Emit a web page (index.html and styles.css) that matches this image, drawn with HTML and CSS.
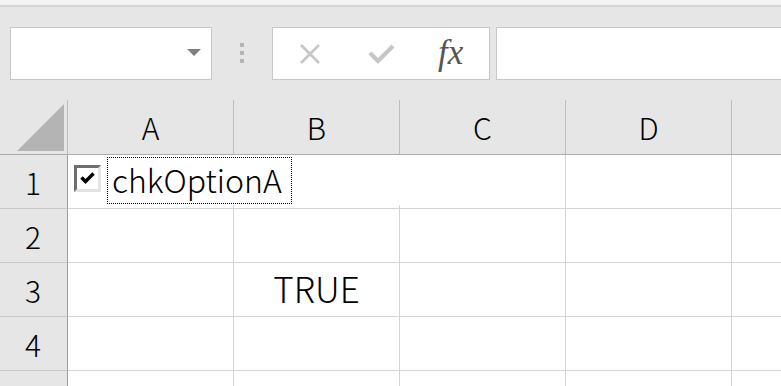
FILE: index.html
```html
<!DOCTYPE html>
<html lang="ja">
<head>
    <meta charset="UTF-8">
    <title>Sheet1</title>
    <link rel="stylesheet" href="styles.css">
</head>
<body>
    <div class="topstrip"></div>

    <div class="toolbar">
        <div class="namebox">
            <span class="drop"></span>
        </div>
        <div class="grip">
            <span></span><span></span><span></span>
        </div>
        <div class="fbuttons">
            <svg class="ico" width="24" height="24" viewBox="0 0 24 24">
                <path d="M3 3 L21 21 M21 3 L3 21" stroke="#c6c6c6" stroke-width="2.6" fill="none"/>
            </svg>
            <svg class="ico" width="28" height="24" viewBox="0 0 28 24">
                <path d="M2 11 L10 19 L25 4" stroke="#c6c6c6" stroke-width="4.2" fill="none"/>
            </svg>
            <span class="fx">fx</span>
        </div>
        <div class="formula"></div>
    </div>

    <div class="sheet">
        <div class="grid">
            <div class="corner"><span class="tri"></span></div>
            <div class="colhead">A</div>
            <div class="colhead">B</div>
            <div class="colhead">C</div>
            <div class="colhead">D</div>
            <div class="colhead last"></div>

            <div class="rowhead">1</div>
            <div class="cell"></div><div class="cell"></div><div class="cell"></div><div class="cell"></div><div class="cell last"></div>

            <div class="rowhead">2</div>
            <div class="cell"></div><div class="cell"></div><div class="cell"></div><div class="cell"></div><div class="cell last"></div>

            <div class="rowhead">3</div>
            <div class="cell"></div><div class="cell value">TRUE</div><div class="cell"></div><div class="cell"></div><div class="cell last"></div>

            <div class="rowhead">4</div>
            <div class="cell"></div><div class="cell"></div><div class="cell"></div><div class="cell"></div><div class="cell last"></div>

            <div class="rowhead">5</div>
            <div class="cell"></div><div class="cell"></div><div class="cell"></div><div class="cell"></div><div class="cell last"></div>
        </div>

        <!-- form control sitting on top of row 1 -->
        <div class="chkcontrol">
            <span class="chkbox">
                <svg width="15" height="13" viewBox="0 0 15 13">
                    <path d="M1.5 5.5 L5.5 9.5 L13.5 1.5" stroke="#000" stroke-width="3.4" fill="none"/>
                </svg>
            </span>
            <span class="chklabel">chkOptionA</span>
        </div>
    </div>
</body>
</html>
```

FILE: styles.css
```css
body {
    margin: 0;
    width: 781px;
    height: 386px;
    overflow: hidden;
    background: #fff;
    font-family: "Noto Sans CJK JP", "Noto Sans", sans-serif;
    font-weight: 300;
    color: #000;
}
.topstrip {
    height: 5px;
    background: #f3f3f3;
    border-bottom: 2px solid #d4d4d4;
}
.toolbar {
    height: 93px;
    background: #e6e6e6;
    display: flex;
    align-items: flex-start;
    padding: 20px 0 0 10px;
    box-sizing: border-box;
    overflow: hidden;
}
.namebox {
    width: 202px;
    height: 53px;
    box-sizing: border-box;
    background: #fff;
    border: 1px solid #c6c6c6;
    position: relative;
}
.drop {
    position: absolute;
    left: 176px;
    top: 21px;
    width: 0;
    height: 0;
    border-left: 7px solid transparent;
    border-right: 7px solid transparent;
    border-top: 7px solid #7f7f7f;
}
.grip {
    width: 60px;
    display: flex;
    flex-direction: column;
    align-items: center;
    gap: 4px;
    padding-top: 16px;
}
.grip span {
    width: 4px;
    height: 4px;
    background: #b4b4b4;
}
.fbuttons {
    width: 218px;
    height: 53px;
    box-sizing: border-box;
    background: #fff;
    border: 1px solid #c6c6c6;
    display: flex;
    align-items: center;
    padding-left: 25px;
}
.fbuttons .ico {
    flex: none;
}
.fbuttons .ico + .ico {
    margin-left: 46px;
}
.fx {
    margin-left: 42px;
    font-family: "Liberation Serif", serif;
    font-style: italic;
    font-weight: normal;
    font-size: 35px;
    color: #555;
    line-height: 1;
    margin-top: -2px;
}
.formula {
    margin-left: 6px;
    flex: 1;
    margin-right: -10px;
    height: 53px;
    box-sizing: border-box;
    background: #fff;
    border: 1px solid #c6c6c6;
}
.sheet {
    position: relative;
}
.grid {
    display: grid;
    grid-template-columns: 68px repeat(4, 166px) 1fr;
    grid-template-rows: 55px repeat(5, 54px);
}
.grid > div {
    box-sizing: border-box;
    display: flex;
    align-items: center;
    justify-content: center;
}
.corner {
    background: #e6e6e6;
    border-right: 1px solid #bdbdbd;
    border-bottom: 1px solid #ababab;
    position: relative;
}
.tri {
    position: absolute;
    right: 3px;
    bottom: 3px;
    width: 0;
    height: 0;
    border-left: 47px solid transparent;
    border-bottom: 47px solid #b4b4b4;
}
.colhead {
    background: #e6e6e6;
    border-right: 1px solid #bdbdbd;
    border-bottom: 1px solid #ababab;
    font-size: 30px;
    padding-bottom: 1px;
}
.rowhead {
    background: #e6e6e6;
    border-right: 1px solid #9f9f9f;
    border-bottom: 1px solid #c8c8c8;
    font-size: 30px;
    padding-right: 1px;
}
.cell {
    border-right: 1px solid #d4d4d4;
    border-bottom: 1px solid #d4d4d4;
}
.cell.last,
.colhead.last {
    border-right: none;
}
.value {
    font-size: 35px;
    padding-bottom: 5px;
}
.chkcontrol {
    position: absolute;
    left: 68px;
    top: 55px;
    width: 350px;
    height: 50px;
    background: #fff;
}
.chkbox {
    position: absolute;
    left: 6px;
    top: 10px;
    width: 27px;
    height: 27px;
    box-sizing: border-box;
    background: #fff;
    border-top: 3px solid #6e6e6e;
    border-left: 3px solid #6e6e6e;
    border-right: 3px solid #e3e3e3;
    border-bottom: 3px solid #e3e3e3;
    display: flex;
    align-items: center;
    justify-content: center;
}
.chklabel {
    position: absolute;
    left: 39px;
    top: 2px;
    width: 185px;
    height: 47px;
    box-sizing: border-box;
    border: 1px dotted #000;
    font-size: 32px;
    line-height: 43px;
    padding-left: 4px;
    white-space: nowrap;
}
```
